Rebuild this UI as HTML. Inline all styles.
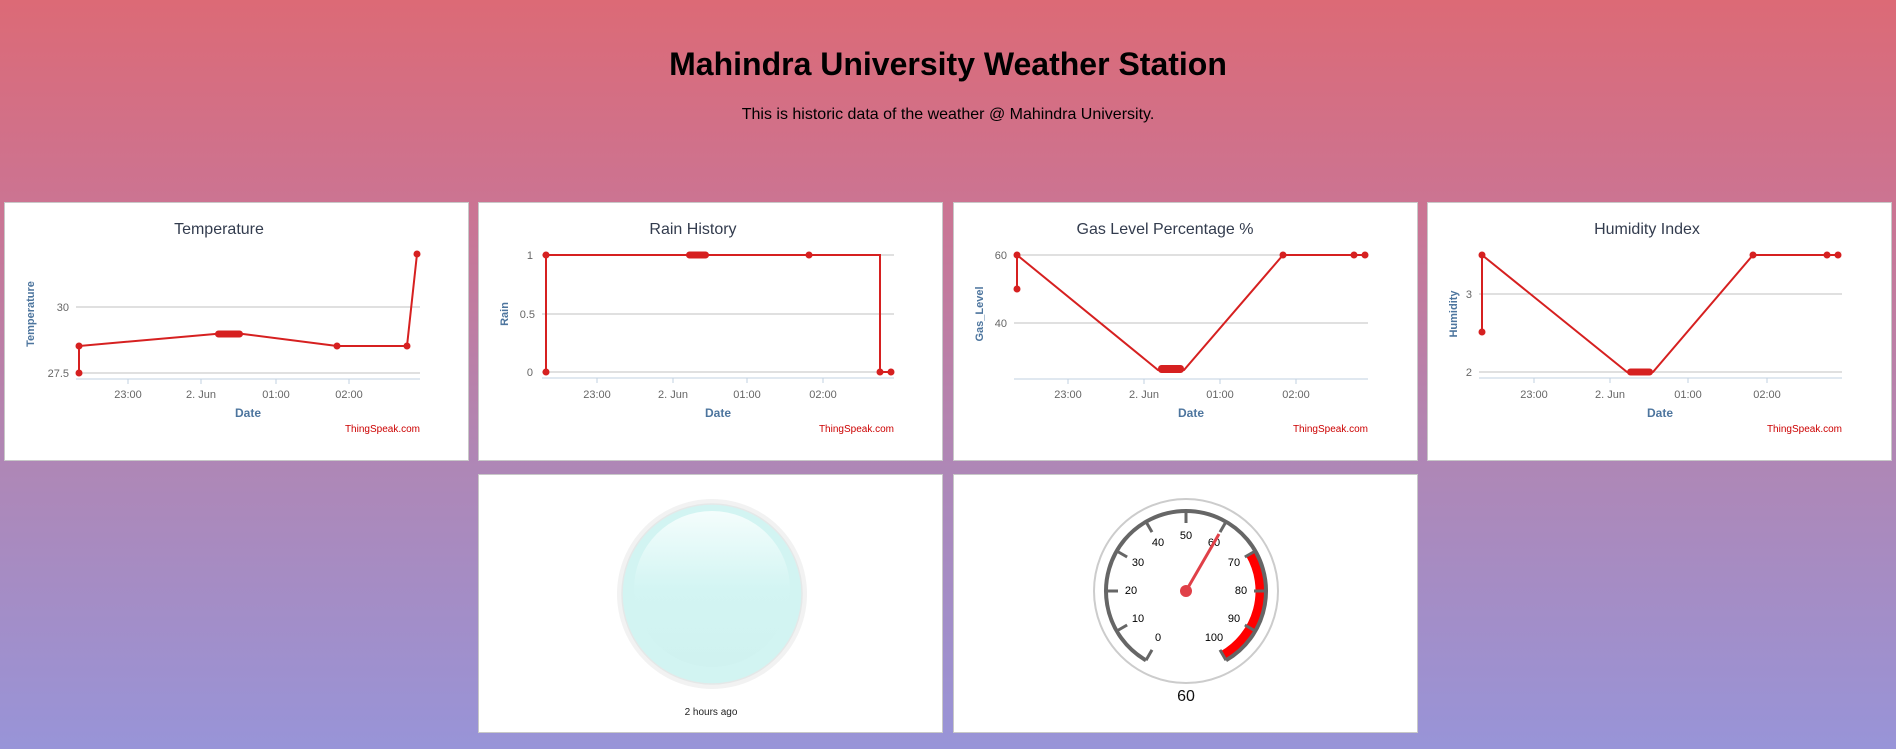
<!DOCTYPE html>
<html><head><meta charset="utf-8"><style>
html,body{margin:0;padding:0}
body{width:1896px;height:749px;overflow:hidden;position:relative;font-family:"Liberation Sans",sans-serif;background:linear-gradient(180deg,#dc6a76 0%,#cd7390 25%,#b086b4 60%,#9894d8 100%)}
h1{position:absolute;top:46px;left:0;width:1896px;margin:0;text-align:center;font-size:32px;font-weight:bold;color:#000}
p.sub{position:absolute;top:106px;left:0;width:1896px;margin:0;text-align:center;font-size:16px;color:#000}
.pn{position:absolute;background:#fff;border:1px solid #c8c8c8;box-sizing:border-box;width:465px}
.pn svg{position:absolute;left:0;top:0}
text{font-family:"Liberation Sans","DejaVu Sans",sans-serif}
</style></head><body>
<h1>Mahindra University Weather Station</h1>
<p class="sub">This is historic data of the weather @ Mahindra University.</p>

<!-- Temperature -->
<div class="pn" style="left:4px;top:202px;height:259px">
<svg width="465" height="259">
<text x="214" y="31" text-anchor="middle" font-size="16" fill="#333c4e">Temperature</text>
<line x1="71" y1="104" x2="415" y2="104" stroke="#c0c0c0"/>
<line x1="71" y1="170" x2="415" y2="170" stroke="#c0c0c0"/>
<line x1="71" y1="176" x2="415" y2="176" stroke="#c0d0e0"/>
<g stroke="#c0d0e0"><line x1="123" y1="176" x2="123" y2="181"/><line x1="196" y1="176" x2="196" y2="181"/><line x1="271" y1="176" x2="271" y2="181"/><line x1="344" y1="176" x2="344" y2="181"/></g>
<g font-size="11" fill="#666" text-anchor="middle"><text x="123" y="195">23:00</text><text x="196" y="195">2. Jun</text><text x="271" y="195">01:00</text><text x="344" y="195">02:00</text></g>
<g font-size="11" fill="#666" text-anchor="end"><text x="64" y="108">30</text><text x="64" y="174">27.5</text></g>
<text transform="translate(29,111) rotate(-90)" text-anchor="middle" font-size="11" font-weight="bold" fill="#4d759e">Temperature</text>
<text x="243" y="214" text-anchor="middle" font-size="12" font-weight="bold" fill="#4d759e">Date</text>
<text x="415" y="229" text-anchor="end" font-size="10" fill="#cc0000">ThingSpeak.com</text>
<polyline points="74,170 74,143 210,131 238,131 332,143 402,143 412,51" fill="none" stroke="#d62020" stroke-width="2"/>
<g fill="#d62020"><circle cx="74" cy="170" r="3.5"/><circle cx="74" cy="143" r="3.5"/><rect x="210" y="127.5" width="28" height="7" rx="3.5"/><circle cx="332" cy="143" r="3.5"/><circle cx="402" cy="143" r="3.5"/><circle cx="412" cy="51" r="3.5"/></g>
</svg></div>

<!-- Rain -->
<div class="pn" style="left:478px;top:202px;height:259px">
<svg width="465" height="259">
<text x="214" y="31" text-anchor="middle" font-size="16" fill="#333c4e">Rain History</text>
<line x1="63" y1="52" x2="415" y2="52" stroke="#c0c0c0"/>
<line x1="63" y1="111" x2="415" y2="111" stroke="#c0c0c0"/>
<line x1="63" y1="169" x2="415" y2="169" stroke="#c0c0c0"/>
<line x1="63" y1="175" x2="415" y2="175" stroke="#c0d0e0"/>
<g stroke="#c0d0e0"><line x1="118" y1="175" x2="118" y2="180"/><line x1="194" y1="175" x2="194" y2="180"/><line x1="268" y1="175" x2="268" y2="180"/><line x1="344" y1="175" x2="344" y2="180"/></g>
<g font-size="11" fill="#666" text-anchor="middle"><text x="118" y="195">23:00</text><text x="194" y="195">2. Jun</text><text x="268" y="195">01:00</text><text x="344" y="195">02:00</text></g>
<g font-size="11" fill="#666" text-anchor="end"><text x="54" y="56">1</text><text x="56" y="115">0.5</text><text x="54" y="173">0</text></g>
<text transform="translate(29,111) rotate(-90)" text-anchor="middle" font-size="11" font-weight="bold" fill="#4d759e">Rain</text>
<text x="239" y="214" text-anchor="middle" font-size="12" font-weight="bold" fill="#4d759e">Date</text>
<text x="415" y="229" text-anchor="end" font-size="10" fill="#cc0000">ThingSpeak.com</text>
<polyline points="67,169 67,52 401,52 401,169 412,169" fill="none" stroke="#d62020" stroke-width="2"/>
<g fill="#d62020"><circle cx="67" cy="169" r="3.5"/><circle cx="67" cy="52" r="3.5"/><rect x="207" y="48.5" width="23" height="7" rx="3.5"/><circle cx="330" cy="52" r="3.5"/><circle cx="401" cy="169" r="3.5"/><circle cx="412" cy="169" r="3.5"/></g>
</svg></div>

<!-- Gas -->
<div class="pn" style="left:953px;top:202px;height:259px">
<svg width="465" height="259">
<text x="211" y="31" text-anchor="middle" font-size="16" fill="#333c4e">Gas Level Percentage %</text>
<line x1="60" y1="52" x2="414" y2="52" stroke="#c0c0c0"/>
<line x1="60" y1="120" x2="414" y2="120" stroke="#c0c0c0"/>
<line x1="60" y1="176" x2="414" y2="176" stroke="#c0d0e0"/>
<g stroke="#c0d0e0"><line x1="114" y1="176" x2="114" y2="181"/><line x1="190" y1="176" x2="190" y2="181"/><line x1="266" y1="176" x2="266" y2="181"/><line x1="342" y1="176" x2="342" y2="181"/></g>
<g font-size="11" fill="#666" text-anchor="middle"><text x="114" y="195">23:00</text><text x="190" y="195">2. Jun</text><text x="266" y="195">01:00</text><text x="342" y="195">02:00</text></g>
<g font-size="11" fill="#666" text-anchor="end"><text x="53" y="56">60</text><text x="53" y="124">40</text></g>
<text transform="translate(29,111) rotate(-90)" text-anchor="middle" font-size="11" font-weight="bold" fill="#4d759e">Gas_Level</text>
<text x="237" y="214" text-anchor="middle" font-size="12" font-weight="bold" fill="#4d759e">Date</text>
<text x="414" y="229" text-anchor="end" font-size="10" fill="#cc0000">ThingSpeak.com</text>
<polyline points="63,86 63,52 204,167 230,167 329,52 400,52 411,52" fill="none" stroke="#d62020" stroke-width="2"/>
<g fill="#d62020"><circle cx="63" cy="86" r="3.5"/><circle cx="63" cy="52" r="3.5"/><rect x="204" y="162" width="26" height="8" rx="3.5"/><circle cx="329" cy="52" r="3.5"/><circle cx="400" cy="52" r="3.5"/><circle cx="411" cy="52" r="3.5"/></g>
</svg></div>

<!-- Humidity -->
<div class="pn" style="left:1427px;top:202px;height:259px">
<svg width="465" height="259">
<text x="219" y="31" text-anchor="middle" font-size="16" fill="#333c4e">Humidity Index</text>
<line x1="51" y1="91" x2="414" y2="91" stroke="#c0c0c0"/>
<line x1="51" y1="169" x2="414" y2="169" stroke="#c0c0c0"/>
<line x1="51" y1="175" x2="414" y2="175" stroke="#c0d0e0"/>
<g stroke="#c0d0e0"><line x1="106" y1="175" x2="106" y2="180"/><line x1="182" y1="175" x2="182" y2="180"/><line x1="260" y1="175" x2="260" y2="180"/><line x1="339" y1="175" x2="339" y2="180"/></g>
<g font-size="11" fill="#666" text-anchor="middle"><text x="106" y="195">23:00</text><text x="182" y="195">2. Jun</text><text x="260" y="195">01:00</text><text x="339" y="195">02:00</text></g>
<g font-size="11" fill="#666" text-anchor="end"><text x="44" y="95">3</text><text x="44" y="173">2</text></g>
<text transform="translate(29,111) rotate(-90)" text-anchor="middle" font-size="11" font-weight="bold" fill="#4d759e">Humidity</text>
<text x="232" y="214" text-anchor="middle" font-size="12" font-weight="bold" fill="#4d759e">Date</text>
<text x="414" y="229" text-anchor="end" font-size="10" fill="#cc0000">ThingSpeak.com</text>
<polyline points="54,129 54,52 199,169 225,169 325,52 399,52 410,52" fill="none" stroke="#d62020" stroke-width="2"/>
<g fill="#d62020"><circle cx="54" cy="129" r="3.5"/><circle cx="54" cy="52" r="3.5"/><rect x="199" y="165.5" width="26" height="7" rx="3.5"/><circle cx="325" cy="52" r="3.5"/><circle cx="399" cy="52" r="3.5"/><circle cx="410" cy="52" r="3.5"/></g>
</svg></div>

<!-- Lamp -->
<div class="pn" style="left:478px;top:474px;height:259px">
<svg width="465" height="259">
<defs>
<linearGradient id="lg" x1="0" y1="0" x2="0" y2="1"><stop offset="0" stop-color="#f4fdfc"/><stop offset="0.5" stop-color="#d3f5f3"/><stop offset="1" stop-color="#d0f2f0"/></linearGradient>
</defs>
<circle cx="233" cy="119" r="95" fill="#f2f2f2"/>
<circle cx="233" cy="119" r="90" fill="#d2f4f2" stroke="#e4e8e8" stroke-width="1.5"/>
<circle cx="233" cy="114" r="78" fill="url(#lg)"/>
<text x="232" y="240" text-anchor="middle" font-size="10" fill="#222">2 hours ago</text>
</svg></div>

<!-- Gauge -->
<div class="pn" style="left:953px;top:474px;height:259px">
<svg width="465" height="259">
<g transform="translate(232,116)">
<circle r="92" fill="#fff" stroke="#ccc" stroke-width="2"/>
<path d="M64.1,-37 A74,74 0 0 1 37,64.1" fill="none" stroke="#ff0000" stroke-width="9"/>
<path d="M-40,69.3 A80,80 0 1 1 40,69.3" fill="none" stroke="#666" stroke-width="4"/>
<g stroke="#666" stroke-width="3">
<line x1="0" y1="-80" x2="0" y2="-68" transform="rotate(-150)"/>
<line x1="0" y1="-80" x2="0" y2="-68" transform="rotate(-120)"/>
<line x1="0" y1="-80" x2="0" y2="-68" transform="rotate(-90)"/>
<line x1="0" y1="-80" x2="0" y2="-68" transform="rotate(-60)"/>
<line x1="0" y1="-80" x2="0" y2="-68" transform="rotate(-30)"/>
<line x1="0" y1="-80" x2="0" y2="-68"/>
<line x1="0" y1="-80" x2="0" y2="-68" transform="rotate(30)"/>
<line x1="0" y1="-80" x2="0" y2="-68" transform="rotate(60)"/>
<line x1="0" y1="-80" x2="0" y2="-68" transform="rotate(90)"/>
<line x1="0" y1="-80" x2="0" y2="-68" transform="rotate(120)"/>
<line x1="0" y1="-80" x2="0" y2="-68" transform="rotate(150)"/>
</g>
<g font-size="11" fill="#000" text-anchor="middle" dominant-baseline="central">
<text x="-28" y="47">0</text><text x="-48" y="28">10</text><text x="-55" y="0">20</text><text x="-48" y="-28">30</text><text x="-28" y="-48">40</text><text x="0" y="-55">50</text><text x="28" y="-48">60</text><text x="48" y="-28">70</text><text x="55" y="0">80</text><text x="48" y="28">90</text><text x="28" y="47">100</text>
</g>
<line x1="0" y1="0" x2="33" y2="-57" stroke="#e04048" stroke-width="3"/>
<circle r="6" fill="#e04048"/>
<text x="0" y="110" text-anchor="middle" font-size="16" fill="#111">60</text>
</g>
</svg></div>
</body></html>
